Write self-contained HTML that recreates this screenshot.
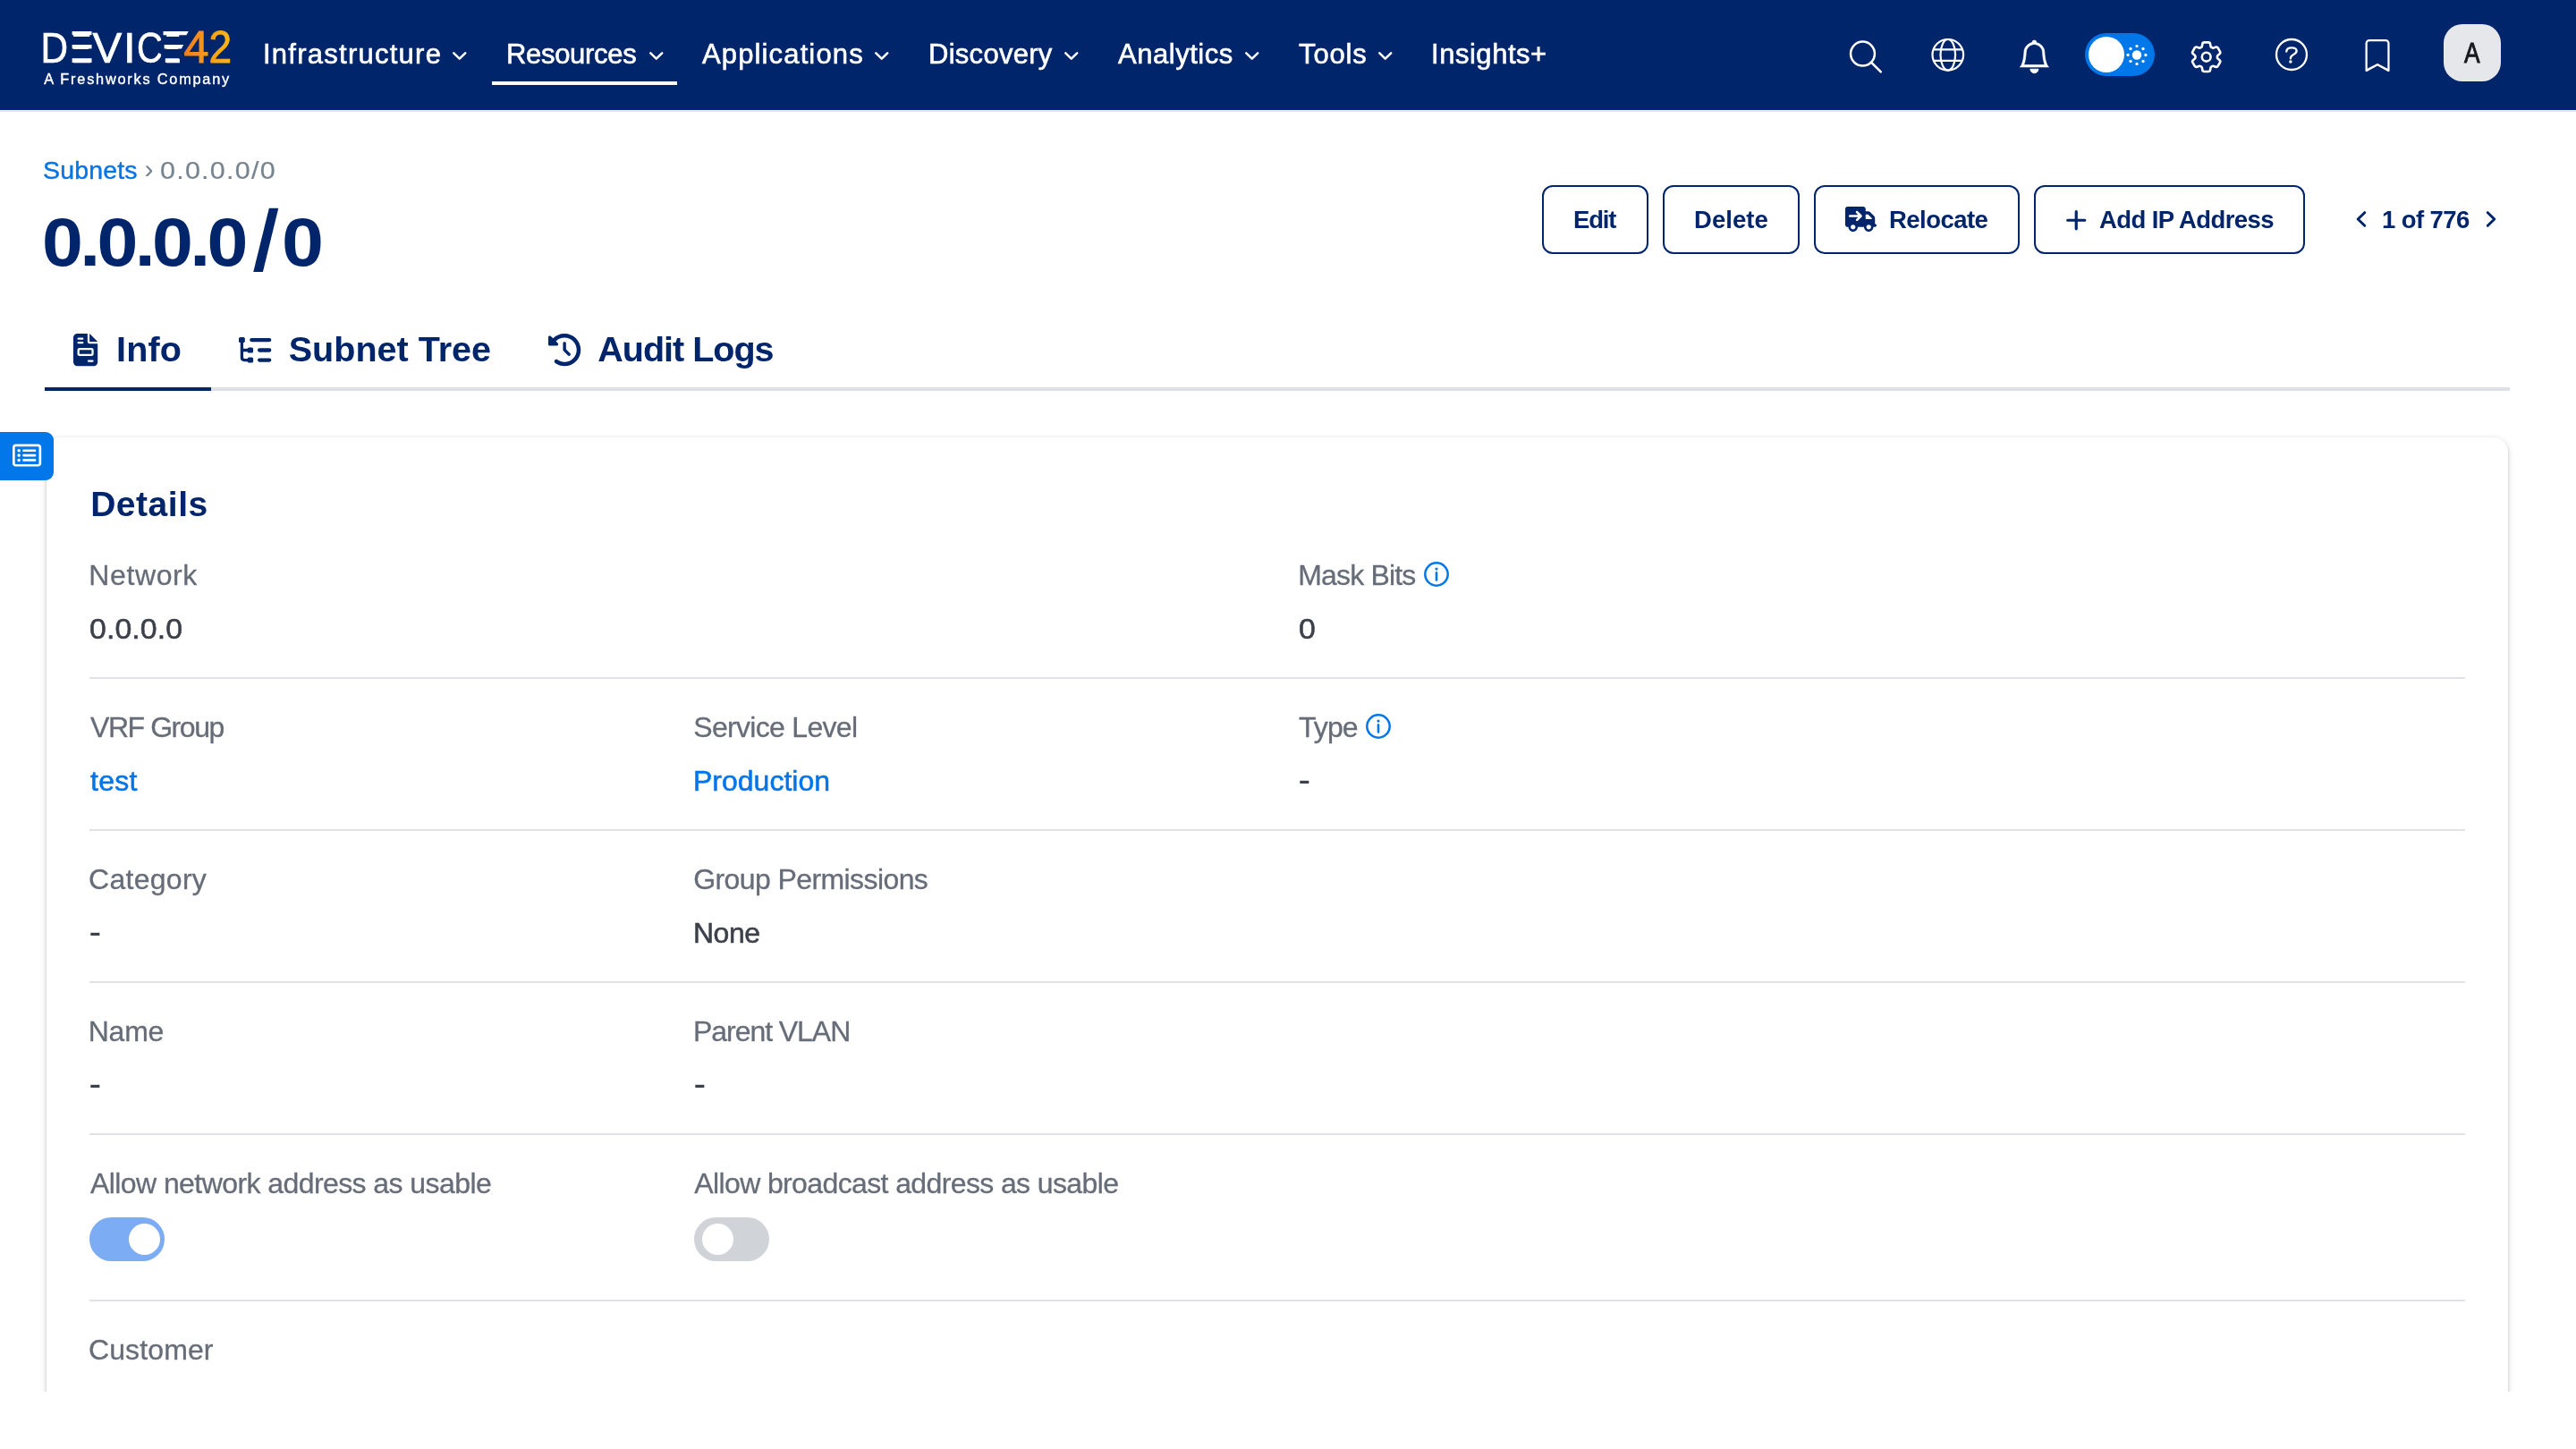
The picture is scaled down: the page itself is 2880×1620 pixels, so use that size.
<!DOCTYPE html>
<html lang="en">
<head>
<meta charset="utf-8">
<title>0.0.0.0/0 - Subnets - Device42</title>
<style>
html,body{margin:0;padding:0}
body{width:2880px;height:1620px;overflow:hidden;background:#fff;position:relative;font-family:"Liberation Sans",sans-serif;}
.t{position:absolute;white-space:nowrap;line-height:1;display:block}
.abs{position:absolute}
svg{position:absolute;overflow:visible}
#nav{position:absolute;left:0;top:0;width:2880px;height:123px;background:#00256B;box-shadow:0 1px 0 #EEF0F0,0 2px 0 #DEE2E7}
.btn{position:absolute;box-sizing:border-box;top:207px;height:77px;border:2px solid #00256B;border-radius:12px;background:#fff}
.hr{position:absolute;left:100px;width:2656px;height:2px;background:#E1E2E6}
#card{position:absolute;left:52px;top:489px;width:2752px;height:1200px;background:#fff;border-radius:16px;box-shadow:0 1px 2px rgba(0,0,0,.12),0 2px 6px rgba(0,0,0,.22)}
.tog{position:absolute;width:84px;height:49px;border-radius:25px}
.tog i{position:absolute;top:7px;width:35px;height:35px;border-radius:50%;background:#fff}
#app{position:absolute;left:0;top:0;width:2880px;height:1620px;overflow:hidden;will-change:transform}
</style>
</head>
<body>
<div id="app">

<div id="nav">
<svg id="logo" style="left:0;top:0" width="300" height="122" viewBox="0 0 300 122">
<defs><linearGradient id="og" x1="0" y1="0" x2="1" y2="0"><stop offset="0" stop-color="#F47B20"/><stop offset="1" stop-color="#FDB913"/></linearGradient></defs>
<text y="70" font-family="Liberation Sans, sans-serif" font-size="48.9" fill="#fff" stroke="#fff" stroke-width="0.7"><tspan x="45.4" textLength="30.6" lengthAdjust="spacingAndGlyphs">D</tspan><tspan x="72.2" textLength="30.5" lengthAdjust="spacingAndGlyphs">E</tspan><tspan x="103.6" textLength="32.8" lengthAdjust="spacingAndGlyphs">V</tspan><tspan x="138" textLength="13.6" lengthAdjust="spacingAndGlyphs">I</tspan><tspan x="153" textLength="29" lengthAdjust="spacingAndGlyphs">C</tspan><tspan x="178.2" textLength="24" lengthAdjust="spacingAndGlyphs">E</tspan></text>
<rect x="74.9" y="33" width="7.2" height="39" fill="#00256B"/>
<rect x="180.2" y="33" width="6" height="39" fill="#00256B"/>
<g fill="#fff"><rect x="80.6" y="35" width="21.9" height="4.2"/><rect x="80.6" y="50" width="21.9" height="4.4"/><rect x="80.6" y="65.2" width="21.9" height="4.8"/>
<path d="M182.5 35 H210.800 L208.400 39.200 H182.500 Z M183.600 50 H205.200 L202.800 54.400 H183.600 Z M184.800 65.200 H200.400 L197.800 70 H184.800 Z"/></g>
<text y="70" font-family="Liberation Sans, sans-serif" font-size="50.6" fill="url(#og)" stroke="url(#og)" stroke-width="0.9"><tspan x="205.6" textLength="28" lengthAdjust="spacingAndGlyphs">4</tspan><tspan x="233.4" textLength="25.6" lengthAdjust="spacingAndGlyphs">2</tspan></text>
</svg>
<span class="t" style="left:49.30px;top:79.95px;font-size:16.3px;color:#fff;letter-spacing:1.792px;-webkit-text-stroke:0.4px #fff;">A Freshworks Company</span>
<span class="t" style="left:294.00px;top:45.46px;font-size:31px;color:#fff;letter-spacing:1.252px;-webkit-text-stroke:0.6px #fff;">Infrastructure</span>
<svg style="left:506px;top:57.5px" width="15.5" height="9.5" viewBox="0 0 15.5 9.5"><path d="M1.3 1.3 L7.75 7.7 L14.2 1.3" fill="none" stroke="#fff" stroke-width="2.5" stroke-linecap="round" stroke-linejoin="round"/></svg>
<span class="t" style="left:566.00px;top:45.46px;font-size:31px;color:#fff;letter-spacing:-0.316px;-webkit-text-stroke:0.6px #fff;">Resources</span>
<svg style="left:725.75px;top:57.5px" width="15.5" height="9.5" viewBox="0 0 15.5 9.5"><path d="M1.3 1.3 L7.75 7.7 L14.2 1.3" fill="none" stroke="#fff" stroke-width="2.5" stroke-linecap="round" stroke-linejoin="round"/></svg>
<span class="t" style="left:785.00px;top:45.46px;font-size:31px;color:#fff;letter-spacing:1.136px;-webkit-text-stroke:0.6px #fff;">Applications</span>
<svg style="left:978.25px;top:57.5px" width="15.5" height="9.5" viewBox="0 0 15.5 9.5"><path d="M1.3 1.3 L7.75 7.7 L14.2 1.3" fill="none" stroke="#fff" stroke-width="2.5" stroke-linecap="round" stroke-linejoin="round"/></svg>
<span class="t" style="left:1038.00px;top:45.46px;font-size:31px;color:#fff;letter-spacing:0.283px;-webkit-text-stroke:0.6px #fff;">Discovery</span>
<svg style="left:1189.5px;top:57.5px" width="15.5" height="9.5" viewBox="0 0 15.5 9.5"><path d="M1.3 1.3 L7.75 7.7 L14.2 1.3" fill="none" stroke="#fff" stroke-width="2.5" stroke-linecap="round" stroke-linejoin="round"/></svg>
<span class="t" style="left:1250.00px;top:45.46px;font-size:31px;color:#fff;letter-spacing:0.533px;-webkit-text-stroke:0.6px #fff;">Analytics</span>
<svg style="left:1392px;top:57.5px" width="15.5" height="9.5" viewBox="0 0 15.5 9.5"><path d="M1.3 1.3 L7.75 7.7 L14.2 1.3" fill="none" stroke="#fff" stroke-width="2.5" stroke-linecap="round" stroke-linejoin="round"/></svg>
<span class="t" style="left:1452.00px;top:45.46px;font-size:31px;color:#fff;letter-spacing:0.875px;-webkit-text-stroke:0.6px #fff;">Tools</span>
<svg style="left:1540.75px;top:57.5px" width="15.5" height="9.5" viewBox="0 0 15.5 9.5"><path d="M1.3 1.3 L7.75 7.7 L14.2 1.3" fill="none" stroke="#fff" stroke-width="2.5" stroke-linecap="round" stroke-linejoin="round"/></svg>
<span class="t" style="left:1600.00px;top:45.46px;font-size:31px;color:#fff;letter-spacing:0.533px;-webkit-text-stroke:0.6px #fff;">Insights+</span>
<div class="abs" style="left:550px;top:91px;width:207px;height:4px;background:#fff"></div>
<svg style="left:2060px;top:40px" width="50" height="50" viewBox="0 0 50 50" fill="none" stroke="#fff" stroke-width="2.500" stroke-linecap="round"><circle cx="22.500" cy="20.050" r="13.450"/><path d="M32 29.600 L42.800 40.300" stroke-width="2.600"/></svg>
<svg style="left:2157px;top:40px" width="44" height="44" viewBox="0 0 44 44" fill="none" stroke="#fff" stroke-width="2.200"><circle cx="20.800" cy="21.300" r="17.300"/><ellipse cx="20.800" cy="21.300" rx="8.300" ry="17.300"/><path d="M4.600 15.300 H37 M4.600 27.800 H37"/></svg>
<svg style="left:2255.800px;top:45.200px" width="36.800" height="36.800" viewBox="0 0 16 16" fill="#fff" stroke="#fff" stroke-width="0.300" stroke-linejoin="round"><path d="M8 16a2 2 0 0 0 2-2H6a2 2 0 0 0 2 2zM8 1.918l-.797.161A4.002 4.002 0 0 0 4 6c0 .628-.134 2.197-.459 3.742-.16.767-.376 1.566-.663 2.258h10.244c-.287-.692-.502-1.490-.663-2.258C12.134 8.197 12 6.628 12 6a4.002 4.002 0 0 0-3.203-3.920L8 1.917zM14.220 12c.223.447.481.801.780 1H1c.299-.199.557-.553.780-1C2.680 10.200 3 6.880 3 6c0-2.420 1.720-4.440 4.005-4.901a1 1 0 1 1 1.990 0A5.002 5.002 0 0 1 13 6c0 .880.320 4.200 1.220 6z"/></svg>
<div class="abs" style="left:2331px;top:37px;width:78px;height:48px;border-radius:24px;background:#0277EA"></div>
<div class="abs" style="left:2335px;top:41px;width:40px;height:40px;border-radius:50%;background:#fff"></div>
<svg style="left:2375px;top:47px" width="28" height="28" viewBox="-14 -14 28 28" fill="#fff"><circle cx="0" cy="0.5" r="5.2"/><circle cx="0.00" cy="-9.40" r="1.65"/><circle cx="7.00" cy="-6.50" r="1.65"/><circle cx="9.90" cy="0.50" r="1.65"/><circle cx="7.00" cy="7.50" r="1.65"/><circle cx="0.00" cy="10.40" r="1.65"/><circle cx="-7.00" cy="7.50" r="1.65"/><circle cx="-9.90" cy="0.50" r="1.65"/><circle cx="-7.00" cy="-6.50" r="1.65"/></svg>
<svg style="left:2444.500px;top:41.600px" width="43.400" height="43.400" viewBox="0 0 24 24" fill="none" stroke="#fff" stroke-width="1.450" stroke-linecap="round" stroke-linejoin="round"><path d="M9.594 3.94c.09-.542.56-.94 1.11-.94h2.593c.55 0 1.02.398 1.11.94l.213 1.281c.063.374.313.686.645.87.074.04.147.083.22.127.325.196.72.257 1.075.124l1.217-.456a1.125 1.125 0 0 1 1.37.49l1.296 2.247a1.125 1.125 0 0 1-.26 1.431l-1.003.827c-.293.241-.438.613-.43.992a7.723 7.723 0 0 1 0 .255c-.008.378.137.75.43.991l1.004.827c.424.35.534.955.26 1.43l-1.298 2.247a1.125 1.125 0 0 1-1.369.491l-1.217-.456c-.355-.133-.75-.072-1.076.124a6.470 6.470 0 0 1-.22.128c-.331.183-.581.495-.644.869l-.213 1.281c-.09.543-.56.940-1.110.940h-2.594c-.55 0-1.019-.398-1.110-.94l-.213-1.281c-.062-.374-.312-.686-.644-.87a6.520 6.520 0 0 1-.22-.127c-.325-.196-.72-.257-1.076-.124l-1.217.456a1.125 1.125 0 0 1-1.369-.49l-1.297-2.247a1.125 1.125 0 0 1 .26-1.431l1.004-.827c.292-.24.437-.613.43-.991a6.932 6.932 0 0 1 0-.255c.007-.38-.138-.751-.43-.992l-1.004-.827a1.125 1.125 0 0 1-.26-1.430l1.297-2.247a1.125 1.125 0 0 1 1.370-.491l1.216.456c.356.133.751.072 1.076-.124.072-.044.146-.086.220-.128.332-.183.582-.495.644-.869l.214-1.280Z"/><circle cx="12" cy="12" r="2.700"/></svg>
<svg style="left:2542.050px;top:41.400px" width="40" height="40" viewBox="0 0 40 40" fill="none" stroke="#fff" stroke-width="2.300" stroke-linecap="round" stroke-linejoin="round"><circle cx="20" cy="20" r="17"/><path d="M14.300 16.500 C14.500 13.600 16.800 12.400 20 12.400 C23.400 12.400 25.600 13.600 25.600 16 C25.600 18.300 23.800 19.200 21.800 20.200 C19.800 21.200 18.900 22 18.900 24.300" stroke-width="2.400"/><circle cx="18.900" cy="28" r="1.750" fill="#fff" stroke="none"/></svg>
<svg style="left:2639.600px;top:43.600px" width="36.100" height="36.100" viewBox="0 0 16 16" fill="#fff"><path d="M2 2a2 2 0 0 1 2-2h8a2 2 0 0 1 2 2v13.500a.500.500 0 0 1-.777.416L8 13.101l-5.223 2.815A.500.500 0 0 1 2 15.500V2zm2-1a1 1 0 0 0-1 1v12.566l4.723-2.482a.500.500 0 0 1 .554 0L13 14.566V2a1 1 0 0 0-1-1H4z"/></svg>
<div class="abs" style="left:2732px;top:27px;width:64px;height:64px;border-radius:21px;background:#E5E7EB"></div>
<span class="t" style="left:2754.50px;top:44.10px;font-size:30.6px;color:#16181d;-webkit-text-stroke:0.9px #16181d;transform:scaleX(.86);transform-origin:0 0;">A</span>
</div>
<span class="t" style="left:48.00px;top:175.62px;font-size:28.5px;color:#0275EA;letter-spacing:0.167px;-webkit-text-stroke:0.4px #0275EA;">Subnets</span>
<span class="t" style="left:161.50px;top:174.35px;font-size:30px;color:#72808E;">›</span>
<span class="t" style="left:179.00px;top:175.62px;font-size:28.5px;color:#76848F;letter-spacing:1.159px;-webkit-text-stroke:0.2px #76848F;transform:scaleX(1.07);transform-origin:0 50%;">0.0.0.0/0</span>
<h1 class="abs" style="left:0;top:232.57px;margin:0;font-size:76px;font-weight:700;color:#00256B;line-height:1;white-space:nowrap"><span class="t" style="left:47.30px;top:0;transform:scaleX(1.085);transform-origin:0 50%;letter-spacing:-3.350px">0.0.0.0</span><span class="t" style="left:285.60px;top:0.00px;transform:skewX(-3.9deg) scale(1.18,1.26);transform-origin:50% 60%">/</span><span class="t" style="left:315.00px;top:0;transform:scaleX(1.11);transform-origin:0 50%">0</span></h1>
<div class="btn" style="left:1724px;width:119px"></div>
<span class="t b" style="left:1759.00px;top:231.72px;font-size:27.5px;color:#00256B;font-weight:700;letter-spacing:-1.167px;">Edit</span>
<div class="btn" style="left:1859px;width:153px"></div>
<span class="t b" style="left:1894.00px;top:231.72px;font-size:27.5px;color:#00256B;font-weight:700;letter-spacing:0.050px;">Delete</span>
<div class="btn" style="left:2028px;width:229.5px"></div>
<span class="t b" style="left:2112.00px;top:231.72px;font-size:27.5px;color:#00256B;font-weight:700;letter-spacing:-0.537px;">Relocate</span>
<div class="btn" style="left:2274px;width:303px"></div>
<span class="t b" style="left:2347.00px;top:231.72px;font-size:27.5px;color:#00256B;font-weight:700;letter-spacing:-0.595px;">Add IP Address</span>
<svg style="left:2063.25px;top:231.25px" width="35" height="28" viewBox="0 0 640 512" fill="#00256B"><path d="M0 48C0 21.500 21.500 0 48 0H368c26.500 0 48 21.500 48 48V96h50.700c17 0 33.300 6.700 45.300 18.700L589.300 192c12 12 18.700 28.300 18.700 45.300V256v32 64c17.700 0 32 14.300 32 32s-14.300 32-32 32H576c0 53-43 96-96 96s-96-43-96-96H256c0 53-43 96-96 96s-96-43-96-96H48c-26.500 0-48-21.500-48-48V48zM416 256H544V237.300L466.700 160H416v96zM160 464a48 48 0 1 0 0-96 48 48 0 1 0 0 96zm368-48a48 48 0 1 0 -96 0 48 48 0 1 0 96 0zM257 95c-9.400-9.400-24.600-9.400-33.900 0s-9.400 24.600 0 33.900l39 39L96 168c-13.300 0-24 10.700-24 24s10.700 24 24 24l166.100 0-39 39c-9.400 9.400-9.400 24.600 0 33.900s24.600 9.400 33.900 0l80-80c9.400-9.400 9.400-24.600 0-33.900L257 95z"/></svg>
<svg style="left:2310px;top:234.500px" width="22.500" height="22.500" viewBox="0 0 22.500 22.500" fill="none" stroke="#00256B" stroke-width="3.2" stroke-linecap="round"><path d="M11.250 1.700 V20.800 M1.700 11.250 H20.800"/></svg>
<svg style="left:2633px;top:235px" width="14" height="20" viewBox="0 0 14 20" fill="none" stroke="#00256B" stroke-width="3" stroke-linecap="round" stroke-linejoin="round"><path d="M10.700 2.700 L3.200 10 L10.700 17.300"/></svg>
<span class="t b" style="left:2663.00px;top:231.72px;font-size:27.5px;color:#00256B;font-weight:700;letter-spacing:-0.606px;">1 of 776</span>
<svg style="left:2777.500px;top:235px" width="14" height="20" viewBox="0 0 14 20" fill="none" stroke="#00256B" stroke-width="3" stroke-linecap="round" stroke-linejoin="round"><path d="M3.300 2.700 L10.800 10 L3.300 17.300"/></svg>
<div class="abs" style="left:50px;top:433px;width:2756px;height:4px;background:#DDE0E6"></div>
<div class="abs" style="left:50px;top:433px;width:186px;height:4px;background:#00256B"></div>
<svg style="left:81.900px;top:373.200px" width="27.200" height="36.300" viewBox="0 0 384 512" fill="#00256B"><path d="M64 0C28.700 0 0 28.700 0 64V448c0 35.300 28.700 64 64 64H320c35.300 0 64-28.700 64-64V160H256c-17.700 0-32-14.300-32-32V0H64zM256 0V128H384L256 0zM80 64h64c8.800 0 16 7.200 16 16s-7.200 16-16 16H80c-8.800 0-16-7.200-16-16s7.200-16 16-16zm0 64h64c8.800 0 16 7.200 16 16s-7.200 16-16 16H80c-8.800 0-16-7.200-16-16s7.200-16 16-16zm16 96H288c17.700 0 32 14.300 32 32v64c0 17.700-14.300 32-32 32H96c-17.700 0-32-14.300-32-32V256c0-17.700 14.300-32 32-32zm0 32v64H288V256H96zM240 416h64c8.800 0 16 7.200 16 16s-7.200 16-16 16H240c-8.800 0-16-7.200-16-16s7.200-16 16-16z"/></svg>
<span class="t tab" style="left:130.00px;top:371.06px;font-size:39.5px;color:#00256B;font-weight:700;letter-spacing:0.167px;">Info</span>
<svg style="left:267px;top:377px" width="36.500" height="28.600" viewBox="0 0 36.500 28.600" fill="none" stroke="#00256B" stroke-linecap="round" stroke-linejoin="round"><path d="M3.400 4 V22.600 Q3.400 25.600 6.400 25.600 H11 M3.400 14.500 H11" stroke-width="3.300"/><path d="M14.300 3.100 H34.200 M23.100 14.500 H34.200 M23.100 25.600 H34.200" stroke-width="4.300"/><g fill="#00256B" stroke="none"><rect x="0" y="0" width="6.800" height="6" rx="1.600"/><rect x="9.700" y="11.400" width="6.400" height="6.200" rx="1.600"/><rect x="9.700" y="22.500" width="6.400" height="6.100" rx="1.600"/></g></svg>
<span class="t tab" style="left:322.75px;top:371.06px;font-size:39.5px;color:#00256B;font-weight:700;letter-spacing:0.025px;">Subnet Tree</span>
<svg style="left:613px;top:373.250px" width="36.250" height="36.250" viewBox="0 0 512 512" fill="#00256B"><path d="M75 75L41 41C25.900 25.900 0 36.600 0 57.900V168c0 13.300 10.700 24 24 24H134.100c21.400 0 32.100-25.900 17-41l-30.800-30.800C155 85.500 203 64 256 64c106 0 192 86 192 192s-86 192-192 192c-40.800 0-78.600-12.700-109.700-34.400c-14.500-10.100-34.400-6.600-44.600 7.900s-6.600 34.400 7.900 44.600C151.200 495 201.700 512 256 512c141.400 0 256-114.600 256-256S397.400 0 256 0C185.300 0 121.300 28.700 75 75zm181 53c-13.300 0-24 10.700-24 24V256c0 6.400 2.500 12.500 7 17l72 72c9.400 9.400 24.600 9.400 33.900 0s9.400-24.600 0-33.900l-65-65V152c0-13.300-10.700-24-24-24z"/></svg>
<span class="t tab" style="left:668.25px;top:371.06px;font-size:39.5px;color:#00256B;font-weight:700;letter-spacing:-1.000px;">Audit Logs</span>
<div id="card"></div>
<div class="abs" style="left:0;top:483px;width:60px;height:54px;border-radius:0 9px 9px 0;background:#0277EA"></div>
<svg style="left:13.750px;top:493.400px" width="32.200" height="32.200" viewBox="0 0 576 576" fill="#fff"><path transform="translate(0,32)" d="M64 80c-8.800 0-16 7.200-16 16V416c0 8.800 7.200 16 16 16H512c8.800 0 16-7.200 16-16V96c0-8.800-7.200-16-16-16H64zM0 96C0 60.700 28.700 32 64 32H512c35.300 0 64 28.700 64 64V416c0 35.300-28.700 64-64 64H64c-35.300 0-64-28.700-64-64V96zm96 64a32 32 0 1 1 64 0 32 32 0 1 1 -64 0zm104 0c0-13.300 10.700-24 24-24H448c13.300 0 24 10.700 24 24s-10.700 24-24 24H224c-13.300 0-24-10.700-24-24zm0 96c0-13.300 10.700-24 24-24H448c13.300 0 24 10.700 24 24s-10.700 24-24 24H224c-13.300 0-24-10.700-24-24zm0 96c0-13.300 10.700-24 24-24H448c13.300 0 24 10.700 24 24s-10.700 24-24 24H224c-13.300 0-24-10.700-24-24zm-72-64a32 32 0 1 1 0-64 32 32 0 1 1 0 64zM96 352a32 32 0 1 1 64 0 32 32 0 1 1 -64 0z"/></svg>
<span class="t h2" style="left:101.20px;top:544.24px;font-size:39px;color:#00256B;font-weight:700;letter-spacing:0.516px;">Details</span>
<span class="t l" style="left:99.30px;top:626.66px;font-size:32px;color:#666D78;letter-spacing:0.618px;-webkit-text-stroke:0.3px #666D78;">Network</span>
<span class="t v" style="left:100.00px;top:687.31px;font-size:32px;color:#3C404A;letter-spacing:0.049px;-webkit-text-stroke:0.55px #3C404A;transform:scaleX(1.06);transform-origin:0 50%;">0.0.0.0</span>
<span class="t l" style="left:1451.25px;top:626.66px;font-size:32px;color:#666D78;letter-spacing:-0.842px;-webkit-text-stroke:0.3px #666D78;">Mask Bits</span>
<svg style="left:1591.5px;top:627.9px" width="28" height="28" viewBox="0 0 28 28" fill="none" stroke="#0277EA" stroke-width="2.500" stroke-linecap="round"><circle cx="14" cy="14" r="12.700"/><path d="M14 12.400 V20.400" stroke-width="2.600"/><circle cx="14" cy="8.100" r="1.600" fill="#0277EA" stroke="none"/></svg>
<span class="t v" style="left:1451.70px;top:687.31px;font-size:32px;color:#3C404A;-webkit-text-stroke:0.55px #3C404A;transform:scaleX(1.06);transform-origin:0 50%;">0</span>
<span class="t l" style="left:101.00px;top:796.66px;font-size:32px;color:#666D78;letter-spacing:-1.438px;-webkit-text-stroke:0.3px #666D78;">VRF Group</span>
<span class="t v" style="left:101.00px;top:857.31px;font-size:32px;color:#0275EA;letter-spacing:0.249px;-webkit-text-stroke:0.55px #0275EA;">test</span>
<span class="t l" style="left:775.25px;top:796.66px;font-size:32px;color:#666D78;letter-spacing:-0.688px;-webkit-text-stroke:0.3px #666D78;">Service Level</span>
<span class="t v" style="left:775.00px;top:857.31px;font-size:32px;color:#0275EA;-webkit-text-stroke:0.55px #0275EA;">Production</span>
<span class="t l" style="left:1452.00px;top:796.66px;font-size:32px;color:#666D78;letter-spacing:-0.932px;-webkit-text-stroke:0.3px #666D78;">Type</span>
<svg style="left:1526.8px;top:797.9px" width="28" height="28" viewBox="0 0 28 28" fill="none" stroke="#0277EA" stroke-width="2.500" stroke-linecap="round"><circle cx="14" cy="14" r="12.700"/><path d="M14 12.400 V20.400" stroke-width="2.600"/><circle cx="14" cy="8.100" r="1.600" fill="#0277EA" stroke="none"/></svg>
<span class="t v" style="left:1451.40px;top:851.09px;font-size:41px;color:#3C404A;">-</span>
<span class="t l" style="left:99.00px;top:967.16px;font-size:32px;color:#666D78;letter-spacing:0.286px;-webkit-text-stroke:0.3px #666D78;">Category</span>
<span class="t v" style="left:99.40px;top:1020.69px;font-size:41px;color:#3C404A;">-</span>
<span class="t l" style="left:775.25px;top:967.16px;font-size:32px;color:#666D78;letter-spacing:-0.594px;-webkit-text-stroke:0.3px #666D78;">Group Permissions</span>
<span class="t v" style="left:775.00px;top:1026.91px;font-size:32px;color:#3C404A;letter-spacing:-0.500px;-webkit-text-stroke:0.55px #3C404A;">None</span>
<span class="t l" style="left:98.75px;top:1137.16px;font-size:32px;color:#666D78;letter-spacing:-0.249px;-webkit-text-stroke:0.3px #666D78;">Name</span>
<span class="t v" style="left:99.40px;top:1190.69px;font-size:41px;color:#3C404A;">-</span>
<span class="t l" style="left:775.00px;top:1137.16px;font-size:32px;color:#666D78;letter-spacing:-1.050px;-webkit-text-stroke:0.3px #666D78;">Parent VLAN</span>
<span class="t v" style="left:775.40px;top:1190.69px;font-size:41px;color:#3C404A;">-</span>
<span class="t l" style="left:101.00px;top:1307.16px;font-size:32px;color:#666D78;letter-spacing:-0.576px;-webkit-text-stroke:0.3px #666D78;">Allow network address as usable</span>
<span class="t l" style="left:776.25px;top:1307.16px;font-size:32px;color:#666D78;letter-spacing:-0.619px;-webkit-text-stroke:0.3px #666D78;">Allow broadcast address as usable</span>
<span class="t l" style="left:99.00px;top:1493.41px;font-size:32px;color:#666D78;letter-spacing:0.109px;-webkit-text-stroke:0.3px #666D78;">Customer</span>
<div class="hr" style="top:757px"></div>
<div class="hr" style="top:927px"></div>
<div class="hr" style="top:1097px"></div>
<div class="hr" style="top:1267px"></div>
<div class="hr" style="top:1453px"></div>
<div class="tog" style="left:100px;top:1361px;background:#7CACF3"><i style="left:43.750px"></i></div>
<div class="tog" style="left:776px;top:1361px;background:#D0D4D8"><i style="left:8.500px"></i></div>
<div class="abs" style="left:0;top:1556px;width:2880px;height:64px;background:#fff"></div>
</div>
</body>
</html>
